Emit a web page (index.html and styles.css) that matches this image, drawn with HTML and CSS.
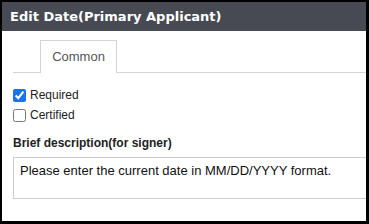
FILE: index.html
```html
<!DOCTYPE html>
<html lang="en">
<head>
    <meta charset="UTF-8">
    <title>Edit Date</title>
    <link rel="stylesheet" href="styles.css">
</head>
<body>
    <div class="dialog">
        <div class="dialog-title">Edit Date(Primary Applicant)</div>

        <div class="dialog-body">
            <div class="tabs">
                <div class="tab active">Common</div>
            </div>

            <div class="checks">
                <label class="check"><input type="checkbox" checked> Required</label>
                <label class="check"><input type="checkbox"> Certified</label>
            </div>

            <div class="field-label">Brief description(for signer)</div>
            <textarea class="description">Please enter the current date in MM/DD/YYYY format.</textarea>
        </div>
    </div>
</body>
</html>
```

FILE: styles.css
```css
* {
    margin: 0;
    padding: 0;
    box-sizing: border-box;
}

body {
    background: #000;
    font-family: 'Liberation Sans', Arial, sans-serif;
    color: #222;
}

/* outer frame */
.dialog {
    width: 369px;
    height: 224px;
    border-style: solid;
    border-color: #000;
    border-width: 2px 3px 3px 2px;
    background: white;
    overflow: hidden;
}

.dialog-title {
    height: 29px;
    line-height: 29px;
    padding-left: 8px;
    background: #474a52;
    color: white;
    font-family: 'DejaVu Sans', Verdana, sans-serif;
    font-weight: bold;
    font-size: 13px;
}

.dialog-body {
    padding: 9px 0 0 11px;
}

/* tabs */
.tabs {
    display: flex;
    border-bottom: 1px solid #d4d4d4;
    padding-left: 27px;
    margin-right: -20px;
}

.tab {
    width: 77px;
    height: 33px;
    line-height: 32px;
    text-align: center;
    font-size: 13px;
    color: #555;
    border: 1px solid #d4d4d4;
    border-bottom: none;
    background: white;
    margin-bottom: -1px;
}

/* checkboxes */
.checks {
    display: flex;
    flex-direction: column;
    gap: 6px;
    margin-top: 15px;
}

.check {
    display: flex;
    align-items: center;
    font-size: 12px;
    color: #222;
    height: 14px;
}

.check input {
    width: 13px;
    height: 13px;
    margin: 0 4px 0 0;
    accent-color: #1a73e8;
}

.field-label {
    margin-top: 14px;
    font-size: 12px;
    font-weight: bold;
    color: #222;
}

.description {
    display: block;
    margin-top: 7px;
    width: 380px;
    height: 42px;
    padding: 5px 6px;
    border: 1px solid #ccc;
    font-family: 'Liberation Sans', Arial, sans-serif;
    font-size: 13px;
    color: #111;
    resize: none;
}
```
